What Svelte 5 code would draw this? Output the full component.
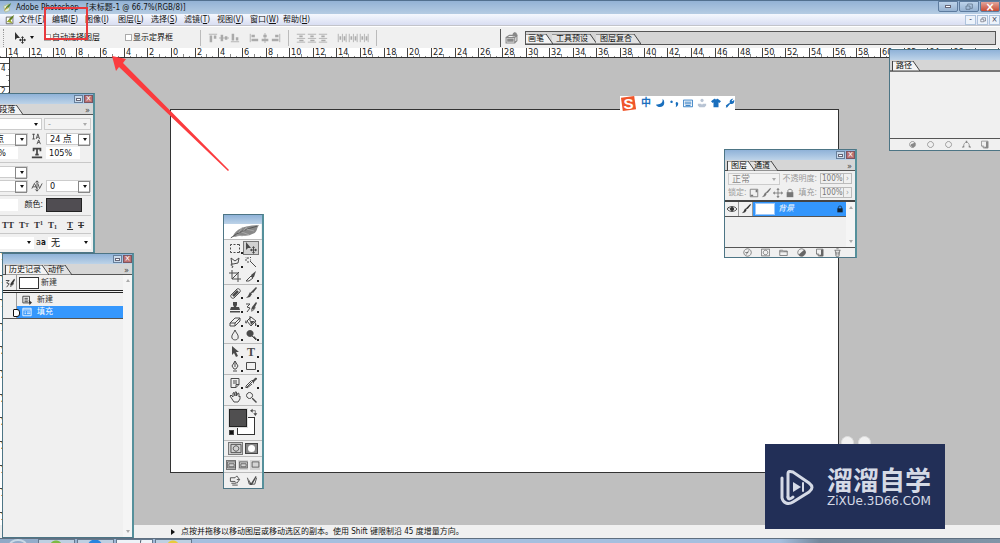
<script lang="ts">
  type Icon = { s?: string; f?: string };

  // 12x12 glyphs: s is stroked, f is filled
  const ICONS: Record<string, Icon> = {
    marquee: { s: "M1.5 4V2.5H3M4.5 2.5h2M8 2.5h2.5V4M10.5 5.5v2M10.5 9v1.5H8M6.5 10.5h-2M3 10.5H1.5V9M1.5 7.5v-2" },
    move: { s: "M8.5 5v6M5.5 8h6", f: "M1 0v8l2-2h3zM8.5 4l1.5 2H7zM8.5 12L7 10h3zM12 8l-2-1.5v3zM5 8l2-1.5v3z" },
    lasso: { s: "M3 9L2 2l4 3 4-3-1 5-5 1M4 8c-3-1-2 3 0 2l-1 2" },
    wand: { s: "M5 5l6 6M3 1v2M3 5v2M0 4h2M5 4h1M1 1.500l1 1M5 2l1-1" },
    crop: { s: "M3 0v9h9M0 3h9v9M3 9l7-7" },
    slice: { s: "M1 11l5-5 2 2-4 3z", f: "M6 5l5-4-2 6-2 1z" },
    heal: { s: "M2 8l6-6c2-1 4 1 3 3l-6 6c-2 1-4-1-3-3z", f: "M3 8l5-5 2 2-5 5z" },
    brush: { s: "M6 6l5-5", f: "M5 5l2 2-2 3-4 1 2-2zM9 2l2-2 1 1-4 5-2-1z" },
    stamp: { f: "M4 1h4v3L7 6h3l1 3H1l1-3h3L4 4zM1 10h10v1.500H1z" },
    history: { s: "M1 3h4l-3 3 3 1-3 4M6 10c2 0 4-2 4-4", f: "M7 6l4-5 1 1-3 6-3 1z" },
    eraser: { s: "M1 8l5-5h5l-5 5zM1 8v3h5V8M6 11l5-5V3" },
    bucket: { s: "M2 6l4-4 5 4-5 5zM5 1v5", f: "M1 5c-2 3 0 4 1 3zM5 6h5l-4 4zM10 7c2 2 2 4 0 4z" },
    drop: { s: "M6 1C5 4 2 6 3 9c1 3 6 2 6 0 1-3-2-5-3-8z" },
    dodge: { s: "M7 7l4 4", f: "M5 1a3.500 3.500 0 1 0 .1 0zM8 8l1-1 3 3-1 1z" },
    arrow: { f: "M3 0v9l2-2 2 4 2-1-2-4h3z" },
    pen: { s: "M4 11h4M6 1v5M6 1L3 6l2 3h2l2-3zM6 6v1" },
    shape: { s: "M1.500 2.500h9v7h-9z" },
    note: { s: "M2 1.500h8v6l-3 3H2zM7 10.500v-3h3M4 4h4M4 6h4" },
    dropper: { s: "M1 11l6-6M2 11l5-4M1 11v-2l5-5", f: "M6 3l2 0 2-2c2-1 3 1 1 2L9 5v2z" },
    hand: { s: "M3 8L1 5l1-1 2 2V2l1-.5L6 5V1h1.500V5L9 2l1 .5V6l1-1v3l-2 3H5z" },
    zoom: { s: "M4.500 1.500a3 3 0 1 0 .1 0zM7 7l4 4", f: "M8 7l4 4-1 1-4-4z" },
    swap: { s: "M3 4h5v5", f: "M4 1v6L0 4zM5 8h6l-3 4z" },
    mask: { s: "M.5 1.500h11v9H.5zM6 3a3 3 0 1 0 .1 0z" },
    screen: { s: "M.5 2.500h11v8H.5zM2.500 5h7v4h-7z" },
    jump: { s: "M1 3h5l2-2 3 4-3 4-2-2H1zM2 9h5M3 11h6M8 5h3" },
    jump2: { s: "M1 3l2 7h6l2-7", f: "M2 4l3 5 5-8 1 1-5 9H4z" },
    alignT: { s: "M1 1.500h10", f: "M2 3h3v8H2zM7 3h3v4H7z" },
    alignM: { s: "M0 6h12", f: "M2 2h3v8H2zM7 4h3v4H7z" },
    alignB: { s: "M1 10.500h10", f: "M2 1h3v8H2zM7 5h3v4H7z" },
    alignL: { s: "M1.500 1v10", f: "M3 2h4v3H3zM3 7h8v3H3z" },
    alignC: { s: "M6 0v12", f: "M4 2h4v3H4zM2 7h8v3H2z" },
    alignR: { s: "M10.500 1v10", f: "M5 2h4v3H5zM1 7h8v3H1z" },
    distV: { s: "M1 1.500h10M1 6.500h10M1 11h10", f: "M4 3h4v2H4zM4 8h5v2H4z" },
    distH: { s: "M1.500 1v10M6.500 1v10M11 1v10", f: "M3 4h2v4H3zM8 4h2v5H8z" },
    tray: { s: "M1 6h8v5H1zM1 6l3-2h7l-2 2M11 4v5l-2 2", f: "M7 3c1-3 4-2 4 0v2H7zM2 7h6v3H2z" },
    eye: { s: "M0 6c3-4 9-4 12 0-3 4-9 4-12 0zM1 4l2 1", f: "M6 3.500a2.500 2.500 0 1 0 .1 0z" },
    lock: { s: "M3.500 6V3c0-2 5-2 5 0v3", f: "M2 5h8v6H2z" },
    checker: { s: "M1.500 1.500h9v9h-9z", f: "M2 8h3v2H2zM8 2h2v3H8z" },
    cross: { s: "M6 1v10M1 6h10", f: "M6 0l2 2H4zM6 12l2-2H4zM0 6l2-2v4zM12 6l-2-2v4z" },
    fx: { s: "M6 1a5 5 0 1 0 .1 0zM4 9l4-6M3 6h4" },
    folder: { s: "M1 3h4l1 1h5v6H1zM1 5h10" },
    adjust: { s: "M6 1a5 5 0 1 0 .1 0z", f: "M10 2a5 5 0 1 1-8 7z" },
    page: { s: "M2 1.500h8.500v9H5L2 8zM2 8h3v3", f: "M8 2h3v9H6V9h2z" },
    trash: { s: "M2 3h8M3 3l1 8h4l1-8M4.500 1h3M5 5v4M7 5v4" },
    ball: { s: "M6 2a4 4 0 1 0 .1 0z", f: "M3 7c2-3 5-2 6-4 2 3 0 7-3 7z" },
    ring: { s: "M6 2a4 4 0 1 0 .1 0z" },
    path: { s: "M0 10l3-2M2 9c0-8 8-8 8 0M12 10l-3-2", f: "M5 1h2v3H5zM1 8h2v2H1zM9 8h2v2H9z" },
    doc: { s: "M1 1.500h8v8H1zM3 4h4M3 6h4M3 8h4", f: "M8 6l4 3-3 3z" },
    form: { s: "M1 1.500h10v9H1zM1 3.500h10M3 6h2M6 6h4M3 8h2M6 8h4" },
    moon: { f: "M9 1c1 5-3 7-8 7 3 5 11 3 10-3 0-2-1-3-2-4z" },
    comma: { f: "M3 3a1.500 1.500 0 1 0 .1 0zM8 6a1.500 1.500 0 0 1 3 1c0 2-1 3-3 4 1-2 0-3 0-5z" },
    keys: { s: "M.5 2.500h11v8H.5zM2 5h8M2 7h8M3 9h6" },
    person: { f: "M6 1a2 2 0 1 0 .1 0zM1 7h4l1 1 1-1h4v2l-2 2H3L1 9z" },
    shirt: { f: "M4 1h1l1 1 1-1h1l4 3-2 2-1-1v6H3V5L2 6 0 4z" },
    wrench: { s: "M1.500 11l5-5", f: "M6 7c-1-3 0-6 4-6L8 3l1 1 2-2c1 4-2 6-5 5zM1 9l4-3 1 1-4 5z" },
    restore: { s: "M4 4V1.500h7V8H8M1.500 4.500h6v5h-6z" },
  };

  const menus = ["文件(F)", "编辑(E)", "图像(I)", "图层(L)", "选择(S)", "滤镜(T)", "视图(V)", "窗口(W)", "帮助(H)"];

  const toolGroups = [
    ["marquee", "move", "lasso", "wand", "crop", "slice"],
    ["heal", "brush", "stamp", "history", "eraser", "bucket", "drop", "dodge"],
    ["arrow", "type", "pen", "shape"],
    ["note", "dropper", "hand", "zoom"],
  ];
  const noFlyout = ["move", "wand", "crop", "hand", "zoom"];

  // two ruler units per label, measured from the document's corner
  const UNIT = 709 / 60;
  const ORIGIN = 171;
  const marks = Array.from({ length: 41 }, (_, i) => (i - 7) * 2);
  const ticks = Array.from({ length: 340 }, (_, i) => i - 56);

  let autoSelect = $state(false);
  let showBounds = $state(false);
  let tool = $state("move");
</script>

{#snippet icon(name: string)}
  <svg class="icon" viewBox="0 0 12 12" aria-hidden="true">
    {#if ICONS[name].s}<path d={ICONS[name].s} fill="none" stroke="currentColor" />{/if}
    {#if ICONS[name].f}<path d={ICONS[name].f} fill="currentColor" />{/if}
  </svg>
{/snippet}

{#snippet caption()}
  <div class="caption">
    <button class="cap-btn" aria-label="最小化"><i class="dash"></i></button>
    <button class="cap-btn cap-close" aria-label="关闭">×</button>
  </div>
{/snippet}

{#snippet tabs(names: string[], more: boolean)}
  <div class="tabs">
    {#each names as name, i}
      <button class="tab" class:tab-on={i === 0}>
        <svg viewBox="0 0 60 10" preserveAspectRatio="xMaxYMin slice" aria-hidden="true">
          <path d="M0 0H53L60 10H0z" />
        </svg>
        <span>{name}</span>
      </button>
    {/each}
    {#if more}<button class="more" aria-label="面板菜单">»</button>{/if}
  </div>
{/snippet}

{#snippet combo(label: string, value: string, kind: string)}
  <span class="combo {kind}">
    <select aria-label={label} disabled={kind.includes("off")}><option>{value}</option></select>
    <i class="drop"></i>
  </span>
{/snippet}

<div class="app">
  <header class="titlebar">
    <svg class="app-icon" viewBox="0 0 12 12" aria-hidden="true">
      <path d="M2 4l6-3 1 8-5 2z" fill="#e9f2d8" stroke="#a9b894" />
      <path d="M3 9c1-4 4-7 8-9-1 4-4 7-7 8z" fill="#55863a" />
      <path d="M3 9l4-4" stroke="#e9a12c" />
    </svg>
    <span class="title">Adobe Photoshop - [未标题-1 @ 66.7%(RGB/8)]</span>
    <div class="win-btns">
      <button class="win-btn" aria-label="最小化"><i class="dash"></i></button>
      <button class="win-btn" aria-label="还原">{@render icon("restore")}</button>
      <button class="win-btn win-close" aria-label="关闭">×</button>
    </div>
  </header>

  <nav class="menubar">
    <svg class="app-icon" viewBox="0 0 12 12" aria-hidden="true">
      <path d="M1.500 2.500h8v8h-8z" fill="#fff" stroke="#555" />
      <path d="M3 9c1-4 4-7 8-9-1 4-4 7-7 8z" fill="#607d20" />
      <path d="M2 8l4-3 3 5z" fill="#9cab28" />
    </svg>
    {#each menus as menu}
      <button class="menu">{menu.slice(0, 3)}<u>{menu[3]}</u>)</button>
    {/each}
    <div class="doc-btns">
      <button class="doc-btn" aria-label="最小化文档">-</button>
      <button class="doc-btn" aria-label="还原文档">{@render icon("restore")}</button>
      <button class="doc-btn" aria-label="关闭文档">×</button>
    </div>
  </nav>

  <div class="options">
    <i class="grip"></i>
    <button class="current-tool" aria-label="移动工具">{@render icon("move")}<i class="drop"></i></button>
    <label class="check auto"><input type="checkbox" bind:checked={autoSelect} />自动选择图层</label>
    <label class="check bounds"><input type="checkbox" bind:checked={showBounds} />显示定界框</label>
    <i class="rule"></i>
    <div class="align">
      {#each ["alignT", "alignM", "alignB"] as name}{@render icon(name)}{/each}
    </div>
    <div class="align">
      {#each ["alignL", "alignC", "alignR"] as name}{@render icon(name)}{/each}
    </div>
    <i class="rule"></i>
    <div class="align">
      {#each ["distV", "distV", "distV"] as name}{@render icon(name)}{/each}
    </div>
    <div class="align">
      {#each ["distH", "distH", "distH"] as name}{@render icon(name)}{/each}
    </div>
    <i class="rule"></i>
    <i class="rule rule-dark"></i>
    <button class="tray" aria-label="文件浏览器">{@render icon("tray")}</button>
    <div class="well">{@render tabs(["画笔", "工具预设", "图层复合"], false)}</div>
  </div>

  <svg class="ruler" aria-hidden="true">
    {#each ticks as t}
      <line
        class:major={t % 4 === 0}
        x1={Math.round(ORIGIN + (t * UNIT) / 2) + 0.5}
        x2={Math.round(ORIGIN + (t * UNIT) / 2) + 0.5}
        y1={t % 4 === 0 ? 0 : t % 2 === 0 ? 6 : 8}
        y2="10"
      />
    {/each}
    {#each marks as m}
      <text x={Math.round(ORIGIN + m * UNIT) + 2} y="7">{Math.abs(m)}</text>
    {/each}
  </svg>

  <main class="workspace">
    <svg class="ruler-v" aria-hidden="true">
      {#each ticks.slice(0, 140) as t}
        <line
          class:major={t % 4 === 0}
          x1={t % 4 === 0 ? 0 : t % 2 === 0 ? 6 : 8}
          x2="10"
          y1={Math.round(52 + (t * UNIT) / 2) + 0.5}
          y2={Math.round(52 + (t * UNIT) / 2) + 0.5}
        />
      {/each}
      {#each marks.slice(5, 26) as m}
        <text x="1" y={Math.round(52 + m * UNIT) + 8}>{Math.abs(m)}</text>
      {/each}
    </svg>
    <div class="document"></div>
  </main>

  <footer class="status">
    <i class="play"></i>点按并拖移以移动图层或移动选区的副本。使用 Shift 键限制沿 45 度增量方向。
  </footer>

  <div class="taskbar">
    <i class="orb"></i>
    <i class="task green"></i>
    <i class="task blue"></i>
    <i class="task active"></i>
    <i class="task yellow"></i>
  </div>

  <section class="palette character">
    {@render caption()}
    {@render tabs(["字符 段落"], true)}
    <div class="chars">
      <div class="crow font-row">
        {@render combo("字体", "", "plain")}
        {@render combo("样式", "-", "plain off")}
      </div>
      <div class="crow">
        {@render combo("字号", "12 点", "cut")}
        <svg class="cicon" viewBox="0 0 14 12" aria-hidden="true"><path d="M3 0v6M1.500 .5h3M1.500 6h3M6 6l2-6 2 6M7 4h2M7 12l2-5 2 5M8 10h2" /></svg>
        {@render combo("行距", "24 点", "")}
      </div>
      <div class="crow">
        <input class="short" aria-label="垂直缩放" value="100%" />
        <svg class="cicon heavy" viewBox="0 0 14 12" aria-hidden="true"><path d="M3 4V1h8v3M7 1v7M5 8h4M1 11h12" /></svg>
        <input class="scale" aria-label="水平缩放" value="105%" />
      </div>
      <hr />
      <div class="crow">{@render combo("比例间距", "", "cut")}</div>
      <div class="crow">
        {@render combo("字距微调", "", "cut")}
        <svg class="cicon" viewBox="0 0 14 12" aria-hidden="true"><path d="M1 9l3-6 3 6M2 7h4M8 3l2 6 3-6M7 0v12M5 2l2-2 2 2M5 10l2 2 2-2" /></svg>
        {@render combo("字距调整", "0", "")}
      </div>
      <hr />
      <div class="crow color-row">
        <input class="base" aria-label="基线偏移" value="" />
        <span>颜色:</span>
        <button class="swatch" aria-label="文本颜色"></button>
      </div>
      <hr />
      <div class="crow faces">
        <button>TT</button><button>T<small>T</small></button><button>T<sup>1</sup></button><button>T<sub>1</sub></button>
        <button class="under">T</button><button class="strike">T</button>
      </div>
      <hr />
      <div class="crow last-row">
        {@render combo("语言", "", "plain")}
        <span class="aa">a<small>a</small></span>
        {@render combo("消除锯齿", "无", "plain")}
      </div>
    </div>
  </section>

  <section class="palette past">
    {@render caption()}
    {@render tabs(["历史记录", "动作"], true)}
    <div class="split">
      <div class="grow">
        <div class="snapshot">
          <span class="slot">{@render icon("history")}</span>
          <i class="thumb"></i>
          新建
        </div>
        <div class="state"><span class="slot"></span>{@render icon("doc")}新建</div>
        <div class="state state-on"><span class="slot"></span>{@render icon("form")}填充</div>
      </div>
      <div class="scroll"><i class="up"></i><i class="down"></i></div>
    </div>
  </section>

  <section class="palette toolbox">
    <div class="caption"></div>
    <svg class="feather" viewBox="0 0 38 15" aria-hidden="true">
      <path d="M9 13C12 4 23 1 36 1c-3 3-1 7-7 9-6 3-13 1-17 3z" fill="#888" />
      <path d="M7 14C15 8 23 5 34 2" fill="none" stroke="#555" />
      <path d="M15 9l4-6M20 7l4-5M18 8l8 3M23 5l8 2M13 11l6 1" stroke="#aaa" />
    </svg>
    {#each toolGroups as group}
      <div class="tools">
        {#each group as name}
          <button
            class="tool"
            class:tool-on={tool === name}
            class:flyout={!noFlyout.includes(name)}
            aria-label={name}
            onclick={() => (tool = name)}
          >
            {#if name === "type"}<b>T</b>{:else}{@render icon(name)}{/if}
          </button>
        {/each}
      </div>
    {/each}
    <div class="colors">
      <i class="back"></i>
      <i class="fore"></i>
      <span class="swap">{@render icon("swap")}</span>
      <i class="reset"></i>
    </div>
    <div class="modes">
      <button class="tool-on" aria-label="标准模式">{@render icon("mask")}</button>
      <button class="quick" aria-label="快速蒙版"><i></i></button>
    </div>
    <div class="modes screens">
      <button class="tool-on" aria-label="标准屏幕">{@render icon("screen")}</button>
      <button aria-label="带菜单全屏">{@render icon("screen")}</button>
      <button aria-label="全屏">{@render icon("shape")}</button>
    </div>
    <div class="modes">
      <button aria-label="转到 ImageReady">{@render icon("jump")}</button>
      <button aria-label="ImageReady">{@render icon("jump2")}</button>
    </div>
  </section>

  <section class="palette layers">
    {@render caption()}
    {@render tabs(["图层", "通道"], true)}
    <div class="lrow">
      {@render combo("混合模式", "正常", "off blend")}
      <label for="opacity">不透明度:</label>
      <span class="pct"><input id="opacity" value="100%" disabled /><i>›</i></span>
    </div>
    <div class="lrow">
      <span>锁定:</span>
      <span class="locks">
        {#each ["checker", "brush", "cross", "lock"] as name}{@render icon(name)}{/each}
      </span>
      <label for="fill">填充:</label>
      <span class="pct"><input id="fill" value="100%" disabled /><i>›</i></span>
    </div>
    <div class="split layer-list">
      <div class="grow">
        <div class="layer">
          <span class="slot">{@render icon("eye")}</span>
          <span class="slot">{@render icon("brush")}</span>
          <div class="layer-name"><i class="thumb"></i><em>背景</em>{@render icon("lock")}</div>
        </div>
      </div>
      <div class="scroll"><i class="up"></i><i class="down"></i></div>
    </div>
    <div class="foot">
      {#each ["fx", "mask", "folder", "adjust", "page", "trash"] as name}{@render icon(name)}{/each}
    </div>
  </section>

  <section class="palette paths">
    <div class="caption"></div>
    {@render tabs(["路径"], false)}
    <div class="blank"></div>
    <div class="foot">
      {#each ["ball", "ring", "ring", "path", "page"] as name}{@render icon(name)}{/each}
    </div>
  </section>

  <div class="ime">
    <svg class="ime-logo" viewBox="0 0 18 18" aria-hidden="true">
      <path d="M1 3L15 1l2 14-14 2z" fill="#f0562b" />
      <text x="9" y="15" text-anchor="middle">S</text>
    </svg>
    <b>中</b>
    {#each ["moon", "comma", "keys", "person", "shirt", "wrench"] as name}
      <span class:faded={name === "person"}>{@render icon(name)}</span>
    {/each}
  </div>

  <div class="bubbles"><i></i><i></i></div>
  <aside class="watermark">
    <svg class="logo" viewBox="0 0 36 36" aria-hidden="true">
      <path d="M9 28V5c0-3 2-3 5-2l16 11c4 3 4 6 0 9L14 33c-5 3-10 1-11-4V9" />
      <path d="M9 28c0 3 3 2 5 0" />
      <path class="solid" d="M14 13l8 5-8 5z" />
      <path class="thin" d="M24 14v8" />
    </svg>
    <div class="brand">
      <strong>溜溜自学</strong>
      <span>ZiXUe.3D66.COM</span>
    </div>
  </aside>

  <div class="callout"></div>
  <svg class="pointer" viewBox="0 0 118 116" aria-hidden="true">
    <path d="M0 0L14 3 11 7 117 114 116 115 7 11 4 15z" />
  </svg>
</div>

<style>
  :global(body) { background: #bfbfbf; }
  .app {
    display: flex; flex-direction: column; position: relative;
    height: 100vh; overflow: hidden; background: #bfbfbf; color: #111;
    font: 8px/10px "DejaVu Sans Condensed", "Noto Sans CJK SC", sans-serif;
  }
  .app :global(*) { box-sizing: border-box; }
  button, input, select { font: inherit; color: inherit; border: 0; padding: 0; margin: 0; background: none; border-radius: 0; }
  button { display: flex; align-items: center; justify-content: center; flex-shrink: 0; }
  .icon { width: 10px; height: 10px; flex-shrink: 0; display: block; }
  .drop { border: 2px solid transparent; border-top: 3px solid #111; border-bottom: 0; }
  .dash { width: 6px; height: 3px; border: 1px solid #667; background: #fff; }

  .titlebar {
    display: flex; align-items: center; height: 14px; flex-shrink: 0; padding-left: 2px;
    border-top: 1px solid #52708f; background: linear-gradient(#93b2d5, #b5cce3);
  }
  .app-icon { width: 10px; height: 10px; flex-shrink: 0; }
  .title { margin-left: 4px; flex: 1; }
  .win-btns { display: flex; align-self: flex-start; gap: 1px; }
  .win-btn { width: 20px; height: 11px; border: 1px solid #5d7b9e; border-radius: 0 0 2px 2px; background: linear-gradient(#bdd3ea, #95b1d0); color: #53667c; }
  .win-btn .icon { width: 8px; height: 8px; }
  .win-close { background: linear-gradient(#e2a59b, #c94a32); color: #fff; font-size: 12px; font-weight: bold; }

  .menubar { display: flex; align-items: center; height: 12px; flex-shrink: 0; padding-left: 5px; background: linear-gradient(#f5f8fe, #d9def2); border-bottom: 1px solid #c3c4ca; }
  .menu { width: 33px; height: 11px; justify-content: flex-start; white-space: nowrap; }
  .menubar .app-icon { margin-right: 4px; }
  .doc-btns { display: flex; gap: 1px; margin-left: auto; }
  .doc-btn { width: 11px; height: 10px; border: 1px solid #aec3dc; background: #edf3fb; color: #445; }
  .doc-btn .icon { width: 6px; height: 6px; }

  .options { display: flex; align-items: center; height: 22px; flex-shrink: 0; padding: 0 4px 0 3px; background: #f0f0f0; border-top: 1px solid #fff; }
  .grip { height: 18px; width: 2px; border-left: 1px dotted #999; margin-right: 8px; }
  .current-tool { gap: 4px; width: 22px; margin-right: 9px; }
  .current-tool .icon { width: 12px; height: 12px; color: #333; }
  .rule { width: 1px; height: 16px; background: #bbb; flex-shrink: 0; margin: 0 6px; }
  .check { display: flex; align-items: center; gap: 1px; white-space: nowrap; }
  .check input { appearance: none; width: 7px; height: 7px; border: 1px solid #aaa; background: #fff; }
  .check input:checked { background: #444; }
  .auto { width: 81px; }
  .bounds { width: 69px; }
  .align { display: flex; gap: 1px; color: #aaa; margin: 0 1px; }
  .align + .align { margin-left: 8px; }
  .rule-dark { height: 18px; background: #555; margin-left: 117px; }
  .tray { width: 12px; color: #888; margin-right: 8px; margin-left: -2px; }
  .tray .icon { width: 13px; height: 13px; }
  .well { flex: 1; height: 14px; border: 1px solid #555; background: #d4d4d4; padding-top: 2px; }

  .ruler { width: 100%; height: 10px; flex-shrink: 0; background: #fff; border-bottom: 1px solid #333; }
  .ruler line, .ruler-v line { stroke: #888; }
  .ruler .major, .ruler-v .major { stroke: #444; }
  .ruler text { fill: #222; font-size: 9px; }
  .ruler-v text { fill: #222; }

  .workspace { position: relative; flex: 1; min-height: 0; }
  .ruler-v { display: block; width: 10px; height: 100%; background: #fff; border-right: 1px solid #333; }
  .document { position: absolute; left: 170px; right: 161px; top: 51px; bottom: 52px; background: #fff; border: 1px solid #333; }

  .status { display: flex; align-items: center; height: 13px; flex-shrink: 0; padding-left: 171px; background: #f0f0f0; white-space: nowrap; }
  .play { border: 3px solid transparent; border-left: 4px solid #111; border-right: 0; margin-right: 6px; }

  .taskbar { display: flex; gap: 2px; height: 5px; flex-shrink: 0; overflow: hidden; border-top: 1px solid #5f6f80; background: linear-gradient(90deg, #8fa9c6, #a5bfdf 20%, #a5bfdf 78%, #75879b 82%, #8195a8); }
  .orb { width: 18px; height: 12px; margin: 0 9px; border-radius: 50%; border: 2px solid #c8d9e6; }
  .task { width: 37px; height: 4px; border: 1px solid #64788d; border-bottom: 0; background: #bed0e2; }
  .green { background: radial-gradient(circle at 17px 7px, #7cba43 6px, #bed0e2 7px); }
  .blue { background: radial-gradient(circle at 17px 7px, #2785e0 7px, #bed0e2 8px); }
  .active { background: linear-gradient(100deg, #eef3f8 65%, #506070 67%, #eef3f8 70%); }
  .yellow { background: radial-gradient(circle at 17px 7px, #e8cb3b 6px, #bed0e2 7px); }

  .palette { position: absolute; display: flex; flex-direction: column; background: #f0f0f0; border: 1px solid #4d7585; border-right: 2px solid #55909b; }
  .caption { display: flex; justify-content: flex-end; align-items: center; gap: 1px; height: 10px; flex-shrink: 0; background: linear-gradient(#8fb2d8, #bdd3e8); }
  .cap-btn { width: 9px; height: 8px; border: 1px solid #67809c; background: #c9d9ea; }
  .cap-close { background: #bd6f70; color: #fff; border-color: #7b5560; }
  .cap-btn .dash { width: 5px; }

  .tabs { display: flex; height: 11px; flex-shrink: 0; padding: 1px 0 0 2px; background: #d6d6d6; border-bottom: 1px solid #555; }
  .tab { position: relative; height: 10px; padding: 0 8px 0 3px; margin-right: -5px; overflow: hidden; white-space: nowrap; border-left: 1px solid #444; }
  .tab svg { position: absolute; inset: 0; width: 100%; height: 100%; }
  .tab path { fill: #e2e2e2; stroke: #444; }
  .tab + .tab { border-left: 0; padding-left: 4px; }
  .tab-on { z-index: 1; }
  .tab-on path { fill: #f4f4f4; }
  .tab span { position: relative; }
  .more { margin-left: auto; padding-right: 3px; font-size: 9px; color: #444; }
  .well .tabs { background: none; border: 0; padding: 0; }
  .well .tab { margin-right: -1px; padding-right: 9px; }
  .well .tab:first-child { border-left: 0; padding-left: 2px; }

  .combo { display: flex; position: relative; height: 12px; background: #fff; border: 1px solid #ccc; }
  .combo select { appearance: none; width: 100%; padding-left: 3px; outline: 0; opacity: 1; }
  .combo .drop { position: absolute; right: 3px; top: 4px; }
  .combo::after { content: ""; position: absolute; right: 0; top: 0; width: 10px; height: 10px; border: 1px solid #888; pointer-events: none; }
  .plain::after, .blend::after { display: none; }
  .off { background: #f3f3f3; color: #999; }
  .off .drop { border-top-color: #aaa; }

  .character { left: -60px; top: 93px; width: 155px; height: 160px; }
  .character .tabs { padding-left: 36px; }
  .chars { display: flex; flex-direction: column; flex: 1; justify-content: space-between; padding: 3px 2px 3px 0; }
  .chars hr { width: 100%; height: 1px; margin: 0; border: 0; background: #c8c8c8; }
  .crow { display: grid; grid-template-columns: 87px 18px 45px; align-items: center; height: 12px; flex-shrink: 0; font-size: 9px; }
  .crow .combo select { font-size: 9px; }
  .cut select { text-align-last: right; padding-right: 23px; }
  .font-row { grid-template-columns: 101px 47px; gap: 2px; }
  .cicon { width: 12px; height: 12px; margin-left: 3px; fill: none; stroke: #444; }
  .heavy { stroke-width: 2; }
  .crow input { height: 12px; background: #fff; }
  .short { width: 77px; text-align: right; padding-right: 12px; }
  .scale { width: 34px; padding-left: 3px; }
  .color-row { grid-template-columns: 77px 28px 45px; height: 14px; }
  .color-row span { text-align: right; padding-right: 3px; font-size: 8px; }
  .base { width: 77px; }
  .swatch { width: 36px; height: 14px; background: #504d52; border: 1px solid #222; }
  .faces { display: flex; gap: 5px; padding-left: 61px; color: #333; font: bold 9px/10px "Liberation Serif", serif; }
  .faces sup, .faces sub, .faces small { font-size: 6px; line-height: 6px; }
  .faces sup { align-self: flex-start; }
  .faces sub { align-self: flex-end; }
  .under { text-decoration: underline; margin-left: 5px; }
  .strike { text-decoration: line-through; }
  .last-row { grid-template-columns: 93px 14px 43px; }
  .last-row .combo { border: 0; }
  .aa { text-align: center; }
  .aa small { font-size: 8px; font-weight: bold; }

  .past { left: 2px; top: 253px; bottom: 5px; width: 132px; }
  .split { display: flex; flex: 1; }
  .grow { flex: 1; color: #333; }
  .scroll { display: flex; flex-direction: column; justify-content: space-between; align-items: center; width: 9px; padding: 4px 0; background: #f5f5f5; }
  .up { border: 2px solid transparent; border-bottom: 3px solid #aaa; border-top: 0; }
  .down { border: 2px solid transparent; border-top: 3px solid #aaa; border-bottom: 0; }
  .thumb { width: 20px; height: 12px; background: #fff; border: 1px solid #333; flex-shrink: 0; }
  .slot { display: flex; align-items: center; justify-content: center; align-self: stretch; width: 14px; border-right: 1px solid #999; }
  .snapshot { display: flex; align-items: center; gap: 2px; height: 18px; border-bottom: 3px double #222; }
  .state { display: flex; align-items: center; gap: 5px; height: 13px; }
  .state-on { background: #3597fd; color: #fff; border-bottom: 1px solid #555; }
  .state-on .slot { position: relative; background: #f0f0f0; }
  .state-on .slot::after { content: ""; position: absolute; right: -4px; top: 3px; width: 5px; height: 6px; border: 1px solid #111; border-radius: 1px 3px 3px 1px; background: #fff; }

  .toolbox { left: 223px; top: 214px; width: 41px; color: #4a4a4a; }
  .toolbox .caption { height: 9px; }
  .feather { display: block; width: 37px; height: 15px; background: #fff; }
  .tools { display: grid; grid-template-columns: 16px 16px; justify-content: center; padding: 1px 0; border-top: 1px solid #bbb; }
  .tool { position: relative; height: 14px; }
  .tool .icon { width: 12px; height: 12px; }
  .tool b { font: bold 12px/12px "Liberation Serif", serif; }
  .tool-on { background: #d2d2d2; border: 1px solid #777; }
  .flyout::after { content: ""; position: absolute; right: 0; bottom: 1px; width: 2px; height: 2px; background: #222; }
  .colors { position: relative; height: 35px; border-top: 1px solid #bbb; }
  .fore { position: absolute; left: 5px; top: 3px; width: 18px; height: 18px; background: #504f50; border: 1px solid #222; outline: 1px solid #ddd; }
  .back { position: absolute; left: 13px; top: 11px; width: 18px; height: 18px; background: #fff; border: 1px solid #333; }
  .swap { position: absolute; right: 4px; top: 2px; }
  .swap .icon { width: 8px; height: 8px; }
  .reset { position: absolute; left: 5px; bottom: 5px; width: 5px; height: 5px; background: #111; border: 1px solid #444; }
  .modes { display: flex; justify-content: center; align-items: center; gap: 2px; height: 16px; border-top: 1px solid #bbb; }
  .modes button { width: 15px; height: 13px; }
  .modes .icon { width: 12px; height: 11px; }
  .modes .quick { width: 13px; height: 11px; background: #888; border: 1px solid #444; }
  .quick i { width: 7px; height: 7px; border-radius: 50%; background: #fff; }
  .screens button { width: 10px; height: 10px; background: #d4d4d4; }
  .screens .icon { width: 9px; height: 9px; }

  .layers { right: 143px; top: 149px; width: 133px; height: 109px; }
  .lrow { display: flex; align-items: center; gap: 3px; height: 13px; margin: 1px 3px 0; color: #999; justify-content: space-between; white-space: nowrap; }
  .blend { width: 52px; }
  .combo.blend select { font-size: 9px; color: #888; }
  .locks { display: flex; gap: 2px; color: #777; }
  .pct { display: flex; align-items: center; border: 1px solid #bbb; height: 11px; width: 32px; }
  .pct input { width: 22px; padding-left: 1px; color: #777; height: 9px; }
  .pct i { width: 8px; border-left: 1px solid #bbb; font-style: normal; text-align: center; line-height: 9px; }
  .layer-list { margin-top: 1px; border-top: 2px solid #444; }
  .layer { display: flex; height: 15px; border-bottom: 1px solid #555; }
  .layer-name { display: flex; align-items: center; flex: 1; gap: 3px; padding: 0 2px; background: #3396fc; color: #fff; }
  .layer-name .thumb { border-color: #9cc8fa; }
  .layer-name .icon { margin-left: auto; width: 8px; height: 8px; color: #123; }
  .foot { display: flex; align-items: center; gap: 8px; height: 12px; flex-shrink: 0; border-top: 1px solid #555; color: #666; }
  .foot .icon { width: 9px; height: 9px; }
  .layers .foot { height: 10px; gap: 9px; padding-left: 18px; }

  .paths { right: -24px; top: 49px; width: 135px; height: 102px; }
  .paths .tabs { border-bottom: 2px solid #777; height: 12px; }
  .blank { flex: 1; }
  .paths .foot { padding-left: 18px; gap: 9px; color: #888; }

  .ime { position: absolute; left: 620px; top: 96px; display: flex; align-items: center; gap: 4px; height: 14px; background: #fff; color: #1a6fbd; }
  .ime-logo { width: 17px; height: 17px; }
  .ime-logo text { fill: #fff; font: bold 16px "Liberation Sans", sans-serif; }
  .ime b { font-size: 10px; }
  .faded { color: #b8c4d4; }

  .bubbles { position: absolute; right: 129px; bottom: 94px; display: flex; gap: 4px; }
  .bubbles i { width: 13px; height: 13px; border-radius: 50%; background: #f1f1f1; border: 1px solid #ddd; }
  .watermark { position: absolute; right: 55px; bottom: 14px; width: 180px; height: 85px; display: flex; align-items: center; gap: 12px; padding-left: 14px; background: #222f57; color: #d5dae6; }
  .brand { padding-bottom: 4px; }
  .watermark strong { display: block; font: bold 26px/32px "Noto Sans CJK SC", sans-serif; }
  .watermark span { display: block; font: 12px/12px "DejaVu Sans", sans-serif; }
  .logo { width: 36px; height: 36px; fill: none; stroke: #d5dae6; stroke-width: 3; stroke-linecap: round; }
  .logo .solid { fill: #d5dae6; stroke: none; }
  .logo .thin { stroke-width: 2; }

  .callout { position: absolute; left: 44px; top: 7px; width: 44px; height: 33px; border: 2px solid #e8393d; pointer-events: none; }
  .pointer { position: absolute; left: 112px; top: 56px; width: 118px; height: 116px; fill: #fb3b3e; pointer-events: none; }
</style>
